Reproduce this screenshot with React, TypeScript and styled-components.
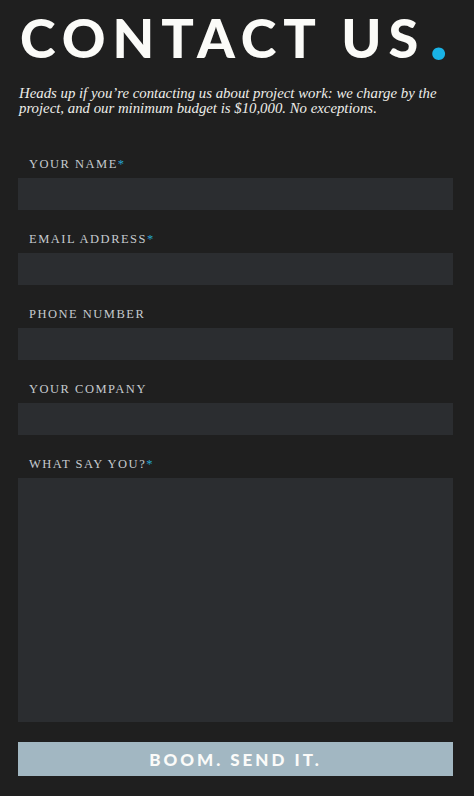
import React from "react";
import styled, { createGlobalStyle } from "styled-components";

const GlobalStyle = createGlobalStyle`
  html, body {
    margin: 0;
    padding: 0;
    background: #1f1f1f;
  }
  * { box-sizing: border-box; }
`;

const Page = styled.main`
  width: 474px;
  min-height: 796px;
  padding: 0 21px 20px 18px;
  background: #1f1f1f;
`;

const Title = styled.h1`
  margin: 0;
  padding: 8px 0 0 2px;
  height: 68px;
  font-family: "Lato", "Liberation Sans", sans-serif;
  font-weight: 900;
  font-size: 54px;
  line-height: 60px;
  letter-spacing: 7px;
  color: #fbfbf8;
  white-space: nowrap;
`;

/* Accent period, fattened with a stroke so it reads as a bold round dot */
const Dot = styled.span`
  margin-left: 7px;
  letter-spacing: 0;
  color: #19b3e6;
  -webkit-text-stroke: 4px #19b3e6;
`;

const Intro = styled.p`
  margin: 18px 0 41px 1px;
  font-family: "Liberation Serif", serif;
  font-style: italic;
  font-size: 14.8px;
  line-height: 15px;
  color: #eeeeea;
`;

const Form = styled.form`
  display: flex;
  flex-direction: column;
`;

const Field = styled.div`
  display: flex;
  flex-direction: column;
  margin-bottom: 22px;
`;

const Label = styled.label`
  padding-left: 11px;
  margin-bottom: 7px;
  font-family: "Liberation Serif", serif;
  font-size: 12.5px;
  line-height: 14px;
  letter-spacing: 1.5px;
  text-transform: uppercase;
  color: #c6cbcf;
`;

const Required = styled.span`
  color: #26a6cf;
  letter-spacing: 0;
`;

const Input = styled.input`
  display: block;
  width: 100%;
  height: 32px;
  border: none;
  outline: none;
  background: #2b2d30;
  color: #ddd;
`;

const TextArea = styled.textarea`
  display: block;
  width: 100%;
  height: 244px;
  border: none;
  outline: none;
  resize: none;
  background: #2b2d30;
  color: #ddd;
`;

const Submit = styled.button`
  margin-top: -2px;
  width: 100%;
  height: 34px;
  border: none;
  background: #a2b7c2;
  color: #fbfbf9;
  font-family: "Lato", "Liberation Sans", sans-serif;
  font-weight: 900;
  font-size: 17px;
  letter-spacing: 3px;
  cursor: pointer;
`;

type FieldDef = { label: string; required?: boolean; multiline?: boolean };

const fields: FieldDef[] = [
  { label: "Your Name", required: true },
  { label: "Email Address", required: true },
  { label: "Phone Number" },
  { label: "Your Company" },
  { label: "What say you?", required: true, multiline: true },
];

export default function App() {
  return (
    <>
      <GlobalStyle />
      <Page>
        <Title>
          CONTACT US<Dot>.</Dot>
        </Title>
        <Intro>
          Heads up if you’re contacting us about project work: we charge by the
          project, and our minimum budget is $10,000. No exceptions.
        </Intro>
        <Form onSubmit={(e) => e.preventDefault()}>
          {fields.map((f) => (
            <Field key={f.label}>
              <Label>
                {f.label}
                {f.required && <Required>*</Required>}
              </Label>
              {f.multiline ? <TextArea /> : <Input type="text" />}
            </Field>
          ))}
          <Submit type="submit">BOOM. SEND IT.</Submit>
        </Form>
      </Page>
    </>
  );
}
